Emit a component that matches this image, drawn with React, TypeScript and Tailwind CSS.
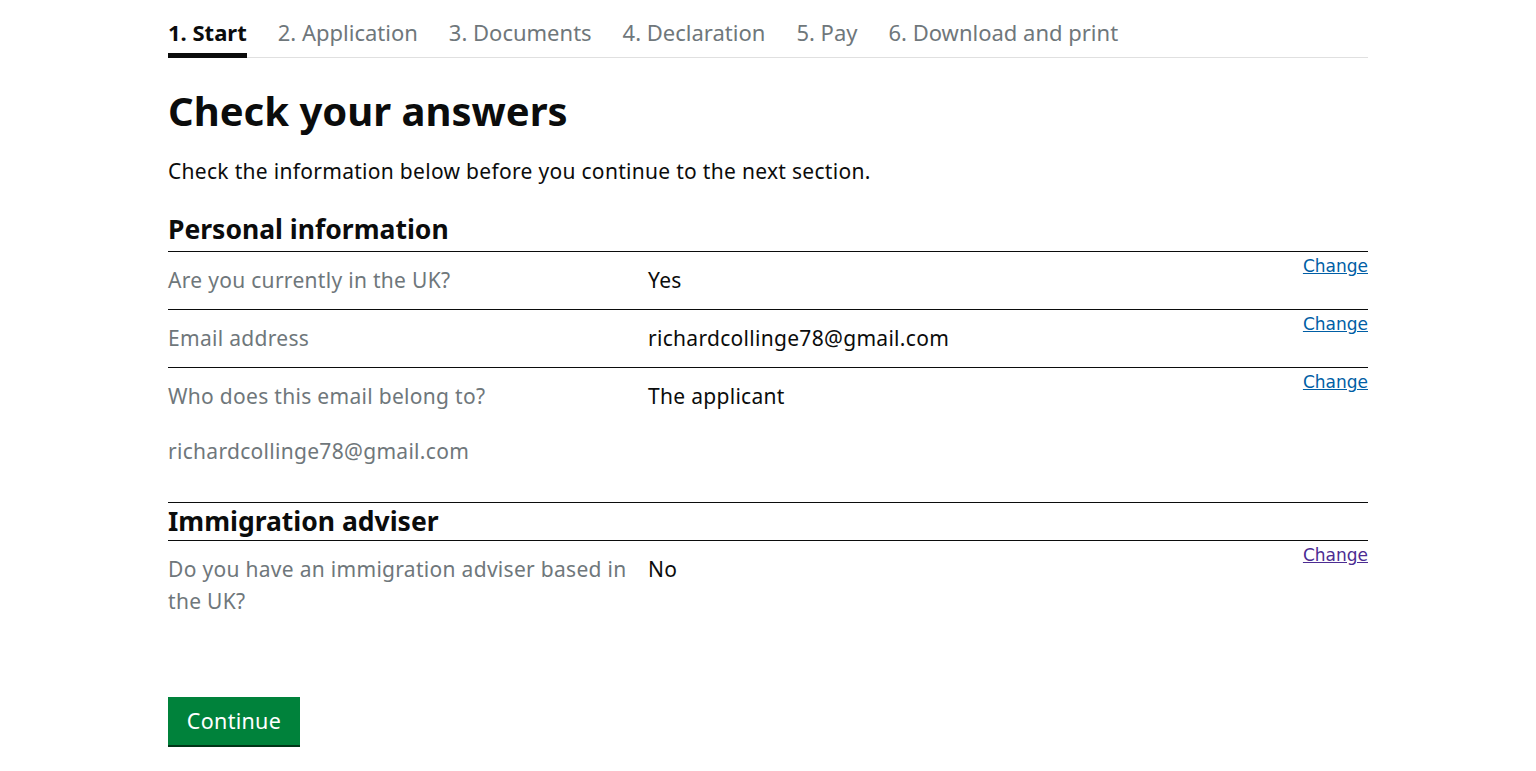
import React from 'react';

const steps = ['1. Start', '2. Application', '3. Documents', '4. Declaration', '5. Pay', '6. Download and print'];

type Row = { key: string; value: string; extra?: string; visited?: boolean };

const personal: Row[] = [
    { key: 'Are you currently in the UK?', value: 'Yes' },
    { key: 'Email address', value: 'richardcollinge78@gmail.com' },
    { key: 'Who does this email belong to?', value: 'The applicant', extra: 'richardcollinge78@gmail.com' },
];

const adviser: Row[] = [
    { key: 'Do you have an immigration adviser based in the UK?', value: 'No', visited: true },
];

const SummaryRow = ({ row }: { row: Row }) => (
    <div className="flex border-b border-[#0b0c0c] last:border-b-0">
        <div className="w-[480px] pr-[16px] pt-[12px] pb-[13px] text-[21px] leading-[32px] tracking-[0.3px] text-[#6f777b]">
            <div>{row.key}</div>
            {row.extra && <div className="mt-[23px] mb-[22px]">{row.extra}</div>}
        </div>
        <div className="flex-1 pt-[12px] text-[21px] leading-[32px] tracking-[0.3px] text-[#0b0c0c]">{row.value}</div>
        <div className="pt-[2px]">
            <a
                href="#"
                className={`font-['DejaVu_Sans',sans-serif] text-[17px] leading-[22px] underline ${row.visited ? 'text-[#4c2c92]' : 'text-[#005ea5]'}`}
            >
                Change
            </a>
        </div>
    </div>
);

export default function App() {
    return (
        <div className="min-h-screen bg-white font-['Noto_Sans',sans-serif] text-[#0b0c0c]">
            <div className="mx-auto w-[1200px]">
                {/* step nav */}
                <nav className="flex gap-[31px] border-b border-[#e0e0e0] pt-[18px]">
                    {steps.map((s, i) => (
                        <div
                            key={s}
                            className={`-mb-px border-b-[5px] pb-[6px] text-[22px] leading-[29px] ${i === 0 ? 'border-[#0b0c0c] font-bold text-[#0b0c0c]' : 'border-transparent text-[#6f777b]'}`}
                        >
                            {s}
                        </div>
                    ))}
                </nav>

                <h1 className="mt-[25px] text-[40px] font-bold leading-[56px]">Check your answers</h1>
                <p className="mt-[17px] text-[21px] leading-[30px] tracking-[0.3px]">Check the information below before you continue to the next section.</p>

                <h2 className="mt-[25px] pb-[4px] text-[26.5px] font-bold leading-[36px] border-b border-[#0b0c0c]">Personal information</h2>
                <div>
                    {personal.map(r => <SummaryRow key={r.key} row={r} />)}
                </div>

                <h2 className="border-y border-[#0b0c0c] text-[26.5px] font-bold leading-[37px]">Immigration adviser</h2>
                <div>
                    {adviser.map(r => <SummaryRow key={r.key} row={r} />)}
                </div>

                <button className="mt-[67px] h-[48px] w-[132px] bg-[#00823b] text-[21.5px] leading-none tracking-[0.3px] text-white shadow-[0_2px_0_#003618]">
                    Continue
                </button>
            </div>
        </div>
    );
}
